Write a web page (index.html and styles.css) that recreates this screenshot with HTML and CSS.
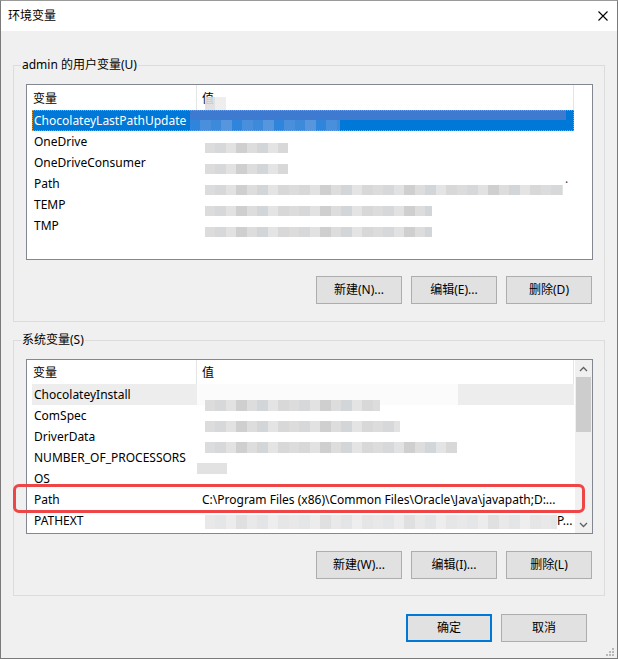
FILE: index.html
```html
<!DOCTYPE html>
<html lang="zh-CN">
<head>
<meta charset="utf-8">
<title>环境变量</title>
<link rel="stylesheet" href="styles.css">
</head>
<body>
<div class="window">
  <div class="titlebar">
    <span class="title">环境变量</span>
    <svg class="close" width="10" height="10" viewBox="0 0 10 10"><path d="M0.5 0.5 L9.5 9.5 M9.5 0.5 L0.5 9.5" stroke="#000" stroke-width="1.1" fill="none"/></svg>
  </div>
  <div class="body">
    <fieldset class="group g1">
      <legend>admin 的用户变量(U)</legend>
      <div class="listbox lb1">
        <div class="lv">
          <div class="lv-head">
            <div class="hc c1">变量</div>
            <div class="hc c2">值<span class="hdrblur"></span></div>
          </div>
          <div class="row selected">
            <div class="cell c1">ChocolateyLastPathUpdate</div>
            <div class="cell c2"><div class="selblur"></div></div>
          </div>
          <div class="row">
            <div class="cell c1">OneDrive</div>
            <div class="cell c2"><div class="mz top" style="width:83px"></div></div>
          </div>
          <div class="row">
            <div class="cell c1">OneDriveConsumer</div>
            <div class="cell c2"><div class="mz top" style="width:83px"></div></div>
          </div>
          <div class="row">
            <div class="cell c1">Path</div>
            <div class="cell c2"><div class="mz top" style="width:358px"></div><span class="dot">.</span></div>
          </div>
          <div class="row">
            <div class="cell c1">TEMP</div>
            <div class="cell c2"><div class="mz top" style="width:227px"></div></div>
          </div>
          <div class="row">
            <div class="cell c1">TMP</div>
            <div class="cell c2"><div class="mz top" style="width:227px"></div></div>
          </div>
        </div>
      </div>
      <div class="btnrow">
        <button class="btn">新建(N)...</button>
        <button class="btn">编辑(E)...</button>
        <button class="btn">删除(D)</button>
      </div>
    </fieldset>

    <fieldset class="group g2">
      <legend>系统变量(S)</legend>
      <div class="listbox lb2">
        <div class="lv">
          <div class="lv-head">
            <div class="hc c1">变量</div>
            <div class="hc c2">值</div>
          </div>
          <div class="row hover">
            <div class="cell c1">ChocolateyInstall</div>
            <div class="cell c2 nopad"><div class="whiteblk"><div class="mz bot" style="width:175px"></div></div></div>
          </div>
          <div class="row">
            <div class="cell c1">ComSpec</div>
            <div class="cell c2"><div class="mz bot" style="width:195px"></div></div>
          </div>
          <div class="row">
            <div class="cell c1">DriverData</div>
            <div class="cell c2"><div class="mz bot" style="width:252px"></div></div>
          </div>
          <div class="row">
            <div class="cell c1">NUMBER_OF_PROCESSORS</div>
            <div class="cell c2 nopad"><div class="mz bot small" style="width:30px"></div></div>
          </div>
          <div class="row">
            <div class="cell c1">OS</div>
            <div class="cell c2"></div>
          </div>
          <div class="row">
            <div class="cell c1">Path</div>
            <div class="cell c2 txt">C:\Program Files (x86)\Common Files\Oracle\Java\javapath;D:...</div>
          </div>
          <div class="row">
            <div class="cell c1">PATHEXT</div>
            <div class="cell c2"><div class="mz ext" style="width:352px"></div><span class="tail">P...</span></div>
          </div>
        </div>
        <div class="scrollbar">
          <div class="sb-arrow">
            <svg width="9" height="6" viewBox="0 0 9 6"><path d="M1 5 L4.5 1.5 L8 5" stroke="#606060" stroke-width="1.3" fill="none"/></svg>
          </div>
          <div class="sb-track"><div class="sb-thumb"></div></div>
          <div class="sb-arrow">
            <svg width="9" height="6" viewBox="0 0 9 6"><path d="M1 1 L4.5 4.5 L8 1" stroke="#606060" stroke-width="1.3" fill="none"/></svg>
          </div>
        </div>
      </div>
      <div class="btnrow">
        <button class="btn">新建(W)...</button>
        <button class="btn">编辑(I)...</button>
        <button class="btn">删除(L)</button>
      </div>
    </fieldset>

    <div class="dlgbtns">
      <button class="btn default">确定</button>
      <button class="btn">取消</button>
    </div>
  </div>
  <div class="annot"></div>
  <svg class="grip" width="8" height="8" viewBox="0 0 8 8">
    <rect x="6" y="0" width="2" height="2" fill="#b8b8b8"/>
    <rect x="3" y="3" width="2" height="2" fill="#b8b8b8"/>
    <rect x="6" y="3" width="2" height="2" fill="#b8b8b8"/>
    <rect x="0" y="6" width="2" height="2" fill="#b8b8b8"/>
    <rect x="3" y="6" width="2" height="2" fill="#b8b8b8"/>
    <rect x="6" y="6" width="2" height="2" fill="#b8b8b8"/>
  </svg>
</div>
</body>
</html>
```

FILE: styles.css
```css
* { box-sizing: border-box; }
html, body { margin: 0; padding: 0; }
body {
  width: 618px;
  height: 659px;
  font-family: "Noto Sans", "Noto Sans CJK SC", sans-serif;
  font-size: 12px;
  color: #000;
  background: #fff;
}
.window {
  position: relative;
  width: 618px;
  height: 659px;
  border: 1px solid #7a7a7a;
  border-top-color: #9a9a9a;
  background: #f0f0f0;
  display: flex;
  flex-direction: column;
}
.titlebar {
  height: 30px;
  flex: none;
  background: #fff;
  display: flex;
  align-items: center;
  justify-content: space-between;
  padding: 0 9px 0 7px;
}
.title { line-height: 16px; }
.close { display: block; }
.body {
  flex: 1;
  padding: 0 12px;
}
.group {
  margin: 0;
  border: 1px solid #dcdcdc;
  padding: 11px 11px 17px 12px;
  min-width: 0;
}
.g1 { margin-top: 26px; }
.g2 { margin-top: 10px; padding-bottom: 16px; }
.group legend {
  margin-left: -5px;
  padding: 0 1px;
  line-height: 16px;
  font-size: 12px;
}
.listbox {
  position: relative;
  border: 1px solid #828790;
  background: #fff;
  display: flex;
}
.lb1 { height: 176px; }
.lb2 { height: 175px; }
.lv { flex: 1; min-width: 0; }
.lv-head {
  display: flex;
  height: 25px;
  width: 547px;
}
.lb2 .lv-head { height: 24px; }
.hc {
  display: flex;
  align-items: center;
  border-right: 1px solid #e5e5e5;
  position: relative;
}
.hc.c1 { width: 170px; padding-left: 6px; }
.hc.c2 { width: 377px; padding-left: 5px; }
.hdrblur {
  position: absolute;
  left: 8px;
  top: 12px;
  width: 21px;
  height: 13px;
  background: linear-gradient(to right, rgba(222,222,222,0.9) 0 10px, rgba(236,236,236,0.9) 10px);
}
.row {
  display: flex;
  height: 21px;
  width: 542px;
  margin-left: 5px;
  white-space: nowrap;
}
.cell {
  line-height: 21px;
  overflow: visible;
}
.cell.c1 { width: 164px; padding-left: 2px; overflow: hidden; }
.cell.c2 { width: 378px; padding-left: 9px; display: flex; align-items: flex-start; }
.cell.c2.nopad { padding-left: 1px; }
.cell.c2.txt { padding-left: 6px; overflow: hidden; display: block; }
.row.selected {
  background: #0078d7;
  color: #fff;
  outline: 1px dotted #d9923f;
  outline-offset: -1px;
}
.selblur {
  margin-left: -15px;
  width: 376px;
  height: 21px;
  background:
    linear-gradient(to bottom, #3d7ad0 0 10px, transparent 10px),
    repeating-linear-gradient(to right, #2f85dc 0 10px, #4a8fdc 10px 21px, #3d89da 21px 31px, #5795dc 31px 42px),
    #0078d7;
  background-size: 100% 100%, 150px 100%, 100% 100%;
  background-repeat: no-repeat;
}
.row.hover { background: #ededed; }
.whiteblk {
  width: 261px;
  height: 21px;
  background: #fbfbfb;
  padding-left: 8px;
  display: flex;
  align-items: flex-start;
}
.mz {
  flex: none;
  height: 10px;
  background: repeating-linear-gradient(to right,
    #dcdcdc 0 10px, #d6d8da 10px 21px, #e2e2e2 21px 31px, #cfcfcf 31px 42px,
    #dddddd 42px 52px, #d3d6d8 52px 63px, #e4e4e4 63px 73px, #d8d8d8 73px 84px);
}
.mz.top { margin-top: 12px; }
.mz.bot { margin-top: 16px; height: 11px; }
.mz.small { background: #e2e2e2; }
.mz.ext { margin-top: 5px; height: 14px; opacity: 0.65; }
.dot { line-height: 12px; margin-left: 2px; color: #444; }
.tail { margin-left: 0; line-height: 21px; }
.scrollbar {
  width: 17px;
  flex: none;
  background: #f0f0f0;
  display: flex;
  flex-direction: column;
}
.sb-arrow {
  height: 17px;
  display: flex;
  align-items: center;
  justify-content: center;
}
.sb-arrow svg { display: block; }
.sb-track { flex: 1; padding: 0 1px; }
.sb-thumb { height: 55px; background: #cdcdcd; }
.btnrow {
  display: flex;
  justify-content: flex-end;
  gap: 9px;
  margin-top: 16px;
  margin-right: 1px;
}
.g2 .btnrow { margin-top: 17px; }
.btn {
  width: 86px;
  height: 28px;
  padding: 0;
  margin: 0;
  background: #e1e1e1;
  border: 1px solid #adadad;
  font-family: "Noto Sans", "Noto Sans CJK SC", sans-serif;
  font-size: 12px;
  color: #000;
  line-height: 16px;
}
.btn.default { border: 2px solid #0078d7; }
.dlgbtns {
  display: flex;
  justify-content: flex-end;
  gap: 9px;
  margin: 18px 18px 0 0;
}
.annot {
  position: absolute;
  left: 12px;
  top: 483px;
  width: 572px;
  height: 29px;
  border: 3px solid #ee4646;
  border-radius: 6px;
}
.grip {
  position: absolute;
  right: 3px;
  bottom: 2px;
}
```
